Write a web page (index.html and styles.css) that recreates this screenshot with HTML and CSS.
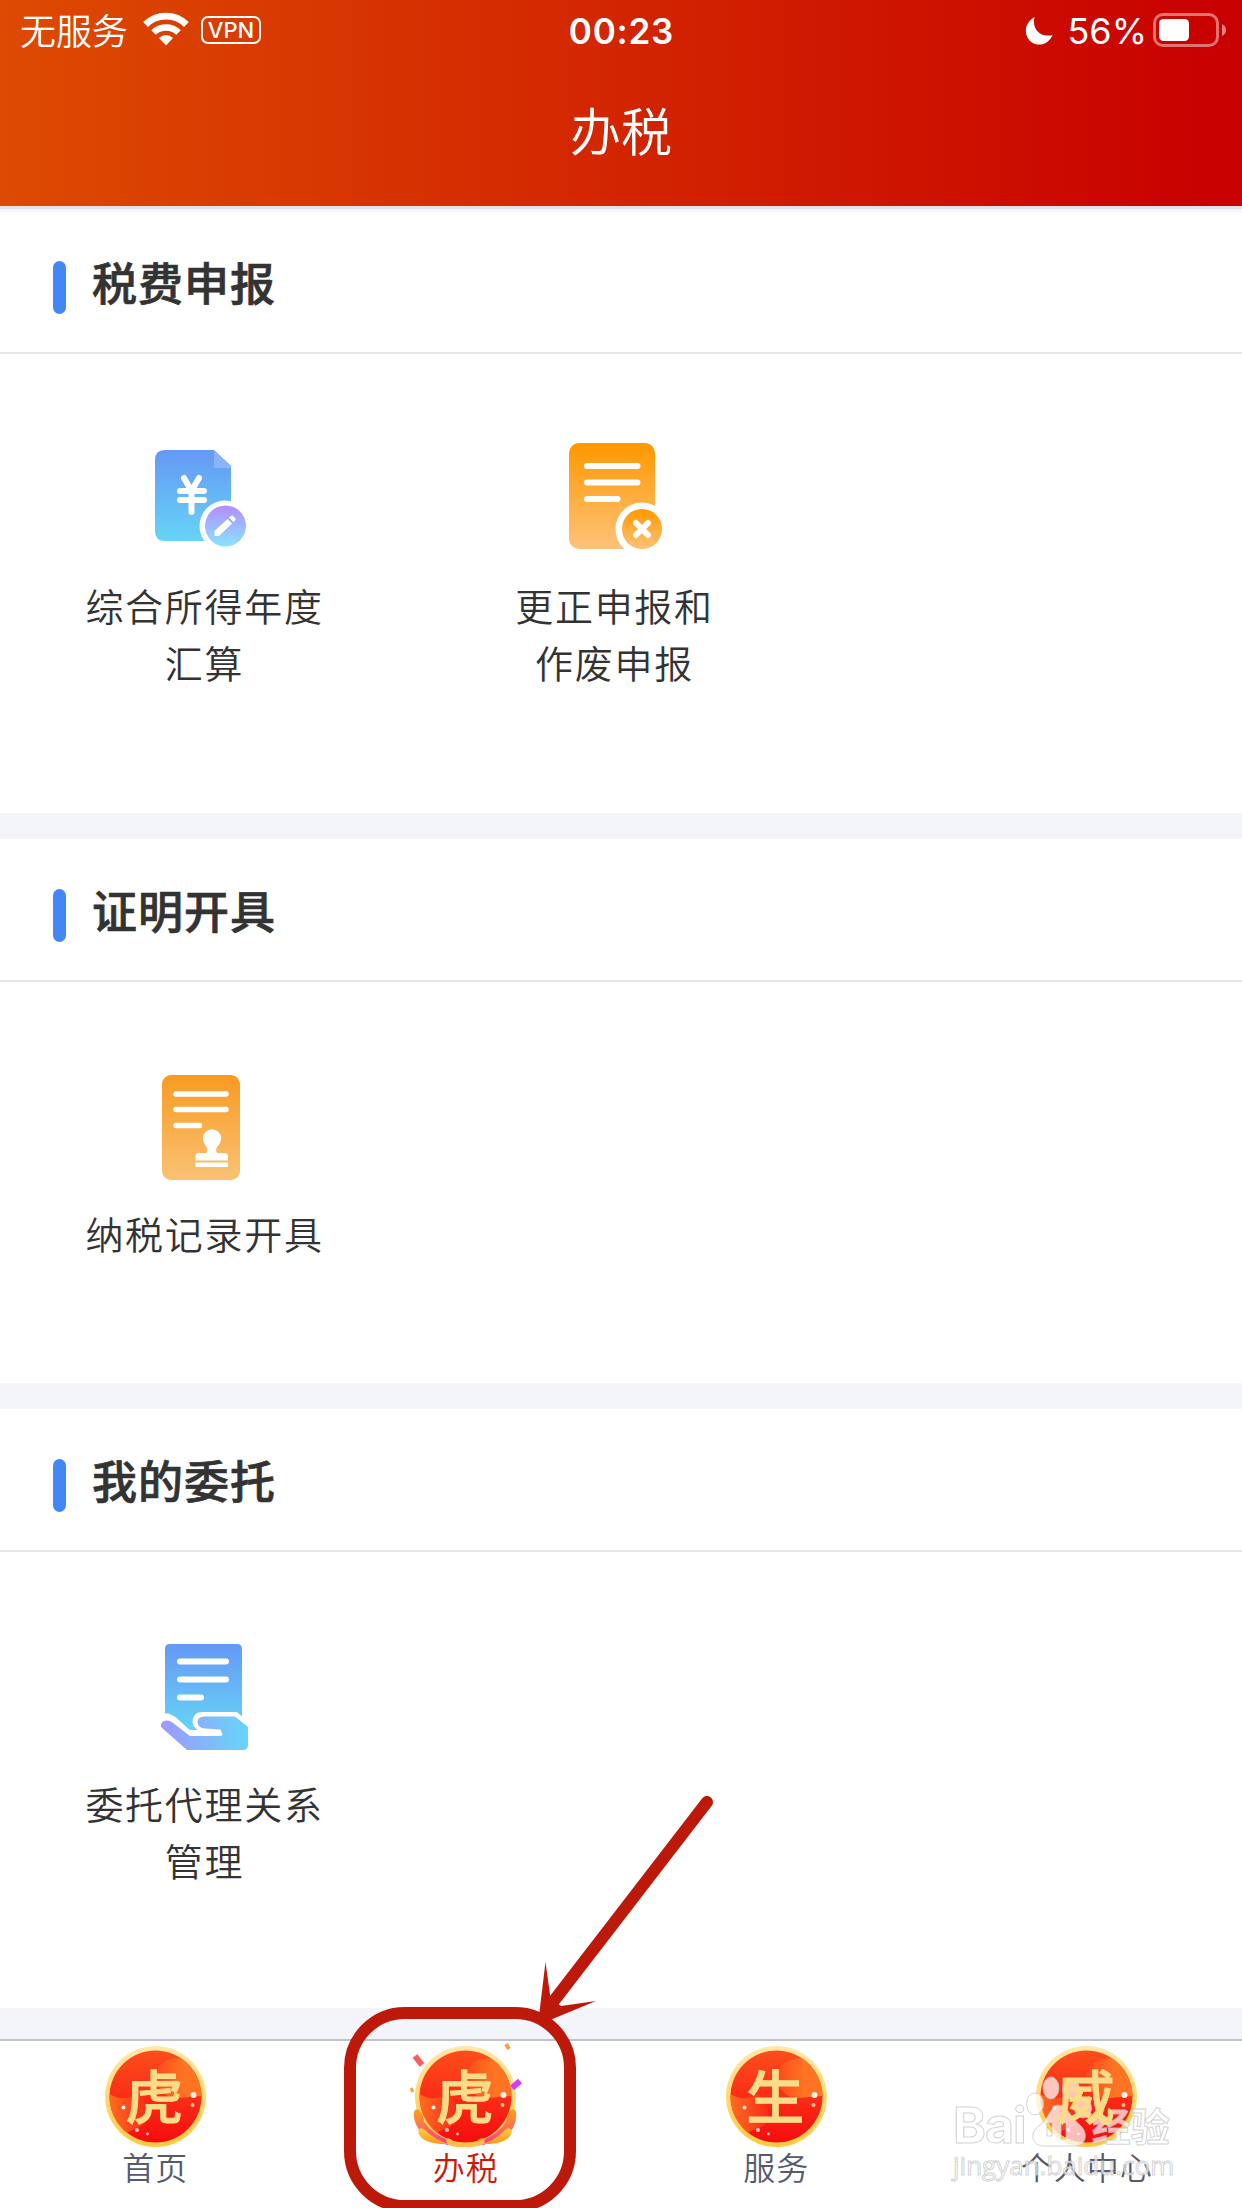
FILE: index.html
```html
<!DOCTYPE html>
<html lang="zh-CN">
<head>
    <meta charset="UTF-8">
    <meta name="viewport" content="width=device-width, initial-scale=1.0">
    <title>办税</title>
    <link rel="stylesheet" href="styles.css">
</head>
<body>
    <!-- Shared gradients and badge background -->
    <svg class="defs" width="0" height="0">
        <defs>
            <linearGradient id="blue" x1="0" y1="0" x2="0" y2="1">
                <stop offset="0" stop-color="#6598f6"/>
                <stop offset="1" stop-color="#66d4f5"/>
            </linearGradient>
            <linearGradient id="purple" x1="0" y1="0" x2="0" y2="1">
                <stop offset="0" stop-color="#b38cff"/>
                <stop offset="1" stop-color="#88e4ff"/>
            </linearGradient>
            <linearGradient id="orange" x1="0" y1="0" x2="0" y2="1">
                <stop offset="0" stop-color="#ff9800"/>
                <stop offset="1" stop-color="#ffc27a"/>
            </linearGradient>
            <linearGradient id="amber" x1="0" y1="0" x2="0" y2="1">
                <stop offset="0" stop-color="#f89a22"/>
                <stop offset="1" stop-color="#fac273"/>
            </linearGradient>
            <linearGradient id="hand" x1="0" y1="0" x2="1" y2="0">
                <stop offset="0" stop-color="#9f98ff"/>
                <stop offset="1" stop-color="#66d5f8"/>
            </linearGradient>
            <linearGradient id="ring" x1="0" y1="0" x2="0" y2="1">
                <stop offset="0" stop-color="#ffe9a8"/>
                <stop offset="1" stop-color="#ffc940"/>
            </linearGradient>
            <linearGradient id="red" x1="0" y1="0" x2="0" y2="1">
                <stop offset="0" stop-color="#fd4e1c"/>
                <stop offset="0.5" stop-color="#fb2d16"/>
                <stop offset="1" stop-color="#f50c0f"/>
            </linearGradient>
            <linearGradient id="glow" x1="0" y1="0" x2="1" y2="0">
                <stop offset="0" stop-color="#fd4a1c"/>
                <stop offset="0.6" stop-color="#ff7423"/>
            </linearGradient>
            <linearGradient id="glow2" x1="0" y1="0" x2="1" y2="0">
                <stop offset="0" stop-color="#ff7123"/>
                <stop offset="1" stop-color="#f92a17"/>
            </linearGradient>
            <linearGradient id="petal" x1="0" y1="0" x2="0" y2="1">
                <stop offset="0" stop-color="#ffa015"/>
                <stop offset="0.5" stop-color="#fb7050"/>
                <stop offset="1" stop-color="#f2309c"/>
            </linearGradient>
            <linearGradient id="leaf" x1="0" y1="0" x2="0" y2="1">
                <stop offset="0" stop-color="#ffcd45"/>
                <stop offset="1" stop-color="#ff9817"/>
            </linearGradient>
            <clipPath id="disc"><circle cx="50.5" cy="50.5" r="46"/></clipPath>
            <g id="badge">
                <circle cx="50.5" cy="50.5" r="50.5" fill="url(#ring)"/>
                <circle cx="50.5" cy="50.5" r="46" fill="url(#red)"/>
                <g clip-path="url(#disc)">
                    <path d="M51 27 C58 9 77 10 90 17 L98 50 C86 50 74 53 67 52 C56 48 49 38 51 27Z" fill="url(#glow)"/>
                    <path d="M4 48 C15 54 25 53 32 48 C45 57 43 73 40 78 C34 82 29 83 21 87 L2 70Z" fill="url(#glow2)"/>
                </g>
                <circle cx="88.500" cy="49" r="3" fill="#fff0e2"/>
                <circle cx="87.500" cy="59" r="2" fill="#ffc38a"/>
                <circle cx="18.500" cy="61.500" r="2" fill="#fff0e2"/>
                <circle cx="32" cy="84" r="2" fill="#ffc9b5"/>
                <circle cx="42.500" cy="88" r="1.400" fill="#ffc9b5"/>
            </g>
        </defs>
    </svg>

    <header class="header">
        <div class="status">
            <div class="status-left">
                <span class="carrier">无服务</span>
                <svg class="wifi" width="46" height="34" viewBox="0 0 46 34">
                    <path d="M2.600 12.500 A29 29 0 0 1 43.400 12.500" fill="none" stroke="#fff" stroke-width="6.800"/>
                    <path d="M10.500 20.500 A18 18 0 0 1 35.500 20.500" fill="none" stroke="#fff" stroke-width="6.500"/>
                    <path d="M16 26 Q23 20 30 26 L23 33.500Z" fill="#fff"/>
                </svg>
                <span class="vpn">VPN</span>
            </div>
            <div class="time">00:23</div>
            <div class="status-right">
                <svg class="moon" width="28" height="28" viewBox="0 0 28 28">
                    <path d="M9.500 0 C7 10 13 21 27.600 18 C24 26 17 29 10 27 C0 24 -4 8 9.500 0Z" fill="#fff"/>
                </svg>
                <span>56%</span>
                <svg class="battery" width="73" height="34" viewBox="0 0 73 34">
                    <rect x="1.500" y="1.500" width="63" height="31" rx="8.500" fill="none" stroke="#fff" stroke-opacity="0.45" stroke-width="3"/>
                    <rect x="6" y="6" width="30" height="22" rx="4.500" fill="#fff"/>
                    <path d="M69 11 Q73 13 73 17 Q73 21 69 23Z" fill="#fff" fill-opacity="0.5"/>
                </svg>
            </div>
        </div>
        <h1>办税</h1>
    </header>

    <main>
        <section class="card">
            <h2>税费申报</h2>
            <div class="items">
                <a class="item">
                    <svg width="114" height="114" viewBox="0 0 114 114">
                        <path d="M18 8 H67 L84 24 V90 Q84 99 76 99 H18 Q8 99 8 89 V18 Q8 8 18 8Z" fill="url(#blue)"/>
                        <path d="M67 8 L84 24 V26 H67Z" fill="#8bb2fa"/>
                        <path d="M37 36 L44.500 49 L52 36 M33 49 H57 M33 58 H57 M44.500 49 V70" fill="none" stroke="#fff" stroke-width="6" stroke-linecap="round"/>
                        <circle cx="78" cy="84" r="25.500" fill="#fff"/>
                        <circle cx="78.500" cy="84" r="20.500" fill="url(#purple)"/>
                        <path d="M67.500 94 V89 L80.500 77 L85 81.500 L72 94Z M82 75.500 L84 74 Q85 73 86 74 L88.500 76.500 Q89 77.500 88 78.500 L86.500 80Z" fill="#fff"/>
                    </svg>
                    <span>综合所得年度<br>汇算</span>
                </a>
                <a class="item">
                    <svg width="114" height="114" viewBox="0 0 114 114">
                        <rect x="12" y="1" width="86" height="106" rx="10" fill="url(#orange)"/>
                        <path d="M30 24 H80.500 M30 40.500 H80.500 M30 57 H60.500" stroke="#fff" stroke-width="6" stroke-linecap="round"/>
                        <circle cx="85" cy="87" r="26.500" fill="#fff"/>
                        <circle cx="85" cy="87" r="20" fill="url(#orange)"/>
                        <path d="M79 81 L91 93 M91 81 L79 93" stroke="#fff" stroke-width="6" stroke-linecap="round"/>
                    </svg>
                    <span>更正申报和<br>作废申报</span>
                </a>
            </div>
        </section>

        <section class="card">
            <h2>证明开具</h2>
            <div class="items">
                <a class="item">
                    <svg width="114" height="114" viewBox="0 0 114 114">
                        <rect x="15" y="5" width="78" height="105" rx="9" fill="url(#amber)"/>
                        <path d="M29 24 H79 M29 39.500 H79 M29 55.500 H52.500" stroke="#fff" stroke-width="5.500" stroke-linecap="round"/>
                        <path d="M59.500 83 Q61.500 79 58 74.500 A9.200 9.200 0 1 1 72 74.500 Q67.500 79 70 83 H77 Q81 83 81 86 V90.500 H48.500 V86 Q48.500 83 52 83Z M48.500 92.500 H81 V97 H48.500Z" fill="#fff"/>
                    </svg>
                    <span>纳税记录开具</span>
                </a>
            </div>
        </section>

        <section class="card">
            <h2>我的委托</h2>
            <div class="items">
                <a class="item">
                    <svg width="114" height="114" viewBox="0 0 114 114">
                        <path d="M23 4 H90 Q95 4 95 9 V90 H43 L18 82 V9 Q18 4 23 4Z" fill="url(#blue)"/>
                        <path d="M33 21.500 H79 M33 39.500 H79 M33 57.500 H54" stroke="#fff" stroke-width="6" stroke-linecap="round"/>
                        <path d="M14 81 Q15 75 21 76 L27 79 L43 93.500 H70 L73 92 L71 90 L58 89.500 Q48 88 48 81 Q49 74 56 74.500 H89 L103 87 V110 H39Z" fill="#fff" stroke="#fff" stroke-width="5"/>
                        <path d="M14 87 Q13 81 20 80.500 Q23 80.500 25.500 82.500 L43 96 H70 Q76 96 75.500 94.500 L73.500 89.500 L58 88.500 Q51 88 50.500 82 Q50.500 77 57 76.500 H88 L101 87 V105 Q101 110 96 110 H40Z" fill="url(#hand)"/>
                    </svg>
                    <span>委托代理关系<br>管理</span>
                </a>
            </div>
        </section>
    </main>

    <nav class="tabs">
        <a class="tab">
            <span class="badge">
                <svg width="101" height="101" viewBox="0 0 101 101"><use href="#badge"/></svg>
                <b>虎</b>
            </span>
            <span>首页</span>
        </a>
        <a class="tab active">
            <span class="badge">
                <svg width="101" height="101" viewBox="0 0 101 101">
                    <use href="#badge"/>
                    <path d="M-1 66 Q0 62 4 64 Q8 67 9 76 Q18 89 38 96 L33 99 Q10 93 3 82 Q-2 74 -1 66Z" fill="url(#petal)"/>
                    <path d="M101 66 Q100 62 96 64 Q92 67 91 76 Q83 89 63 96 L68 99 Q91 93 98 82 Q102 74 101 66Z" fill="url(#petal)"/>
                    <path d="M4 83 Q7 81 10 84 Q20 94 35 98 Q12 99 5 90 Q2 86 4 83Z" fill="url(#leaf)"/>
                    <path d="M96 83 Q93 81 90 84 Q81 94 66 98 Q88 99 95 90 Q98 86 96 83Z" fill="url(#leaf)"/>
                    <path d="M31 93 Q34 91 38 95 Q50 99 62 95 Q66 91 70 93 L69 98 Q60 102 50 101 Q39 102 32 98Z" fill="#ffbd4b"/>
                    <path d="M0 10 L7 19" stroke="#ff5d5d" stroke-width="6"/>
                    <path d="M97 42 L105 35" stroke="#d83cfa" stroke-width="6"/>
                    <path d="M91 -2 L94 3" stroke="#ff9c3e" stroke-width="4"/>
                    <path d="M-4 42 L-2 46" stroke="#ffa040" stroke-width="3"/>
                </svg>
                <b>虎</b>
            </span>
            <span>办税</span>
        </a>
        <a class="tab">
            <span class="badge">
                <svg width="101" height="101" viewBox="0 0 101 101"><use href="#badge"/></svg>
                <b>生</b>
            </span>
            <span>服务</span>
        </a>
        <a class="tab">
            <span class="badge">
                <svg width="101" height="101" viewBox="0 0 101 101"><use href="#badge"/></svg>
                <b>威</b>
            </span>
            <span>个人中心</span>
        </a>
    </nav>

    <!-- Hint overlay -->
    <div class="marker"></div>
    <svg class="arrow" width="190" height="240" viewBox="0 0 190 240">
        <path d="M167 12 L13 212" stroke="#bd190b" stroke-width="12" stroke-linecap="round"/>
        <path d="M5.500 172 L10.500 208 L21 216 L56 211 L10 230 L-2 234 Z" fill="#bd190b"/>
    </svg>

    <!-- Watermark -->
    <div class="watermark">
        <div class="wm-logo">
            <span class="wm-latin">Bai</span>
            <svg class="paw" width="66" height="74" viewBox="0 0 66 74">
                <g fill="#fff" fill-opacity="0.72" stroke="#c4c4c4" stroke-opacity="0.75">
                    <ellipse cx="9" cy="28" rx="8.500" ry="11"/>
                    <ellipse cx="25" cy="12" rx="8" ry="11"/>
                    <ellipse cx="45" cy="13" rx="8.500" ry="10"/>
                    <ellipse cx="57" cy="32" rx="8.500" ry="10"/>
                    <path fill-rule="evenodd" d="M32 29 C41 29 45 42 54 49 C63 57 60 70 49 70 H18 C5 70 3 56 14 49 C23 43 25 29 32 29Z M21 47 V60 H26 V47Z M35 47 V63 H40 V47Z"/>
                </g>
            </svg>
            <span class="wm-cn">经验</span>
        </div>
        <div class="wm-url">jingyan.baidu.com</div>
    </div>
</body>
</html>
```

FILE: styles.css
```css
* {
    box-sizing: border-box;
}

body {
    margin: 0;
    width: 1242px;
    height: 2208px;
    overflow: hidden;
    position: relative;
    display: flex;
    flex-direction: column;
    background-color: #fff;
    color: #333;
    font-family: "Noto Sans CJK SC", sans-serif;
}

.defs {
    position: absolute;
}

/* Header */
.header {
    height: 206px;
    flex-shrink: 0;
    color: #fff;
    background: linear-gradient(to right, #dd4a02, #c80000 99%);
}

.status {
    height: 62px;
    display: grid;
    grid-template-columns: 1fr auto 1fr;
    align-items: center;
    padding: 0 16px 0 20px;
    font-size: 36px;
    line-height: 62px;
}

.status-left,
.status-right {
    display: flex;
    align-items: center;
}

.status-left {
    font-weight: 350;
}

.carrier {
    height: 62px;
    line-height: 58px;
}

.status-right {
    justify-content: flex-end;
    font-family: Inter, sans-serif;
}

.wifi {
    margin: 0 12px 4px 15px;
}

.vpn {
    width: 60px;
    height: 28px;
    margin-bottom: 2px;
    border: 2px solid #fff;
    border-radius: 7px;
    font: 500 22px/24px Inter, sans-serif;
    text-align: center;
}

.time {
    padding-right: 3px;
    font-family: Inter, sans-serif;
    font-size: 35px;
    font-weight: 600;
    letter-spacing: 0.8px;
}

.moon {
    margin-right: 14px;
}

.battery {
    margin: 0 0 2px 6px;
}

h1 {
    margin: 0;
    height: 138px;
    font-size: 51px;
    font-weight: 350;
    line-height: 134px;
    text-align: center;
}

/* Sections */
main {
    height: 1833px;
    background-color: #f4f5fa;
    border-top: 3px solid #e3e4ea;
    padding-top: 3px;
}

.card {
    background-color: #fff;
    margin-bottom: 26px;
}

h2 {
    height: 142px;
    margin: 0;
    padding: 0 52px 0 53px;
    display: flex;
    align-items: center;
    gap: 26px;
    border-bottom: 2px solid #e6e6e6;
    font-size: 45px;
    font-weight: 500;
    letter-spacing: 1px;
    line-height: 140px;
    -webkit-text-stroke: 0.7px #333;
}

h2::before {
    content: "";
    width: 13px;
    height: 53px;
    margin-top: 11px;
    border-radius: 7px;
    background-color: #4387f7;
}

.items {
    display: grid;
    grid-template-columns: 409px 411px 409px;
    padding: 88px 0 123px;
}

.card + .card h2 {
    height: 143px;
    line-height: 139px;
}

.card + .card .items {
    padding-bottom: 122px;
}

.card:last-child .items {
    padding-bottom: 120px;
}

.item {
    display: flex;
    flex-direction: column;
    align-items: center;
    gap: 20px;
    font-size: 38px;
    font-weight: 350;
    line-height: 57px;
    letter-spacing: 1.7px;
    text-align: center;
}

.item svg {
    margin-right: 2px;
}

/* Bottom tabs */
.tabs {
    height: 169px;
    display: grid;
    grid-template-columns: repeat(4, 1fr);
    border-top: 2px solid #c2c3c8;
    background-color: #fff;
}

.tab {
    display: flex;
    flex-direction: column;
    align-items: center;
    padding-top: 5px;
    color: #555b6c;
    font-size: 32px;
    font-weight: 350;
    letter-spacing: 1px;
    line-height: 39px;
}

.tab.active {
    color: #d01807;
}

.badge {
    display: grid;
    height: 101px;
}

.badge svg,
.badge b {
    grid-area: 1 / 1;
}

.badge svg {
    overflow: visible;
}

.badge b {
    z-index: 1;
    padding-right: 2px;
    color: #fadc88;
    font-size: 58px;
    font-weight: 500;
    letter-spacing: 0;
    line-height: 97px;
    text-align: center;
    -webkit-text-stroke: 1px #fadc88;
}

/* Overlays */
.marker {
    position: absolute;
    left: 344px;
    top: 2007px;
    width: 232px;
    height: 205px;
    border: 12px solid #bd190b;
    border-radius: 61px;
}

.arrow {
    position: absolute;
    left: 540px;
    top: 1790px;
    overflow: visible;
}

.watermark {
    position: absolute;
    left: 953px;
    top: 2076px;
    color: rgba(255, 255, 255, 0.7);
    -webkit-text-stroke: 1px rgba(190, 190, 190, 0.7);
}

.wm-logo {
    display: flex;
    align-items: flex-end;
    height: 74px;
}

.wm-latin {
    font: 700 50px/50px Inter, sans-serif;
    letter-spacing: -1px;
}

.wm-cn {
    font-size: 39px;
    font-weight: 700;
    line-height: 52px;
}

.wm-url {
    font: 400 26px/30px "Open Sans", sans-serif;
}
```
